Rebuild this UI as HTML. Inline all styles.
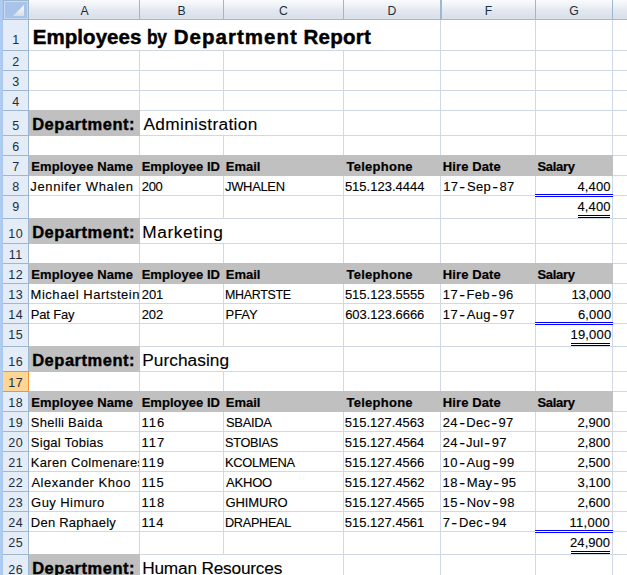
<!DOCTYPE html>
<html><head><meta charset="utf-8"><style>
html,body{margin:0;padding:0;}
body{width:627px;height:575px;position:relative;overflow:hidden;background:#fff;font-family:"Liberation Sans",sans-serif;}
div{position:absolute;}
.t{white-space:nowrap;-webkit-text-stroke:0.2px #000;}
.b{-webkit-text-stroke:0;}
.h{-webkit-text-stroke:0;}
</style></head><body>
<div style="left:29px;top:50px;width:598px;height:1px;background:#d0d7e5"></div><div style="left:29px;top:70px;width:598px;height:1px;background:#d0d7e5"></div><div style="left:29px;top:90px;width:598px;height:1px;background:#d0d7e5"></div><div style="left:29px;top:110px;width:598px;height:1px;background:#d0d7e5"></div><div style="left:29px;top:135px;width:598px;height:1px;background:#d0d7e5"></div><div style="left:29px;top:155px;width:598px;height:1px;background:#d0d7e5"></div><div style="left:29px;top:175px;width:598px;height:1px;background:#d0d7e5"></div><div style="left:29px;top:195px;width:598px;height:1px;background:#d0d7e5"></div><div style="left:29px;top:218px;width:598px;height:1px;background:#d0d7e5"></div><div style="left:29px;top:243px;width:598px;height:1px;background:#d0d7e5"></div><div style="left:29px;top:263px;width:598px;height:1px;background:#d0d7e5"></div><div style="left:29px;top:283px;width:598px;height:1px;background:#d0d7e5"></div><div style="left:29px;top:303px;width:598px;height:1px;background:#d0d7e5"></div><div style="left:29px;top:323px;width:598px;height:1px;background:#d0d7e5"></div><div style="left:29px;top:346px;width:598px;height:1px;background:#d0d7e5"></div><div style="left:29px;top:371px;width:598px;height:1px;background:#d0d7e5"></div><div style="left:29px;top:391px;width:598px;height:1px;background:#d0d7e5"></div><div style="left:29px;top:411px;width:598px;height:1px;background:#d0d7e5"></div><div style="left:29px;top:431px;width:598px;height:1px;background:#d0d7e5"></div><div style="left:29px;top:451px;width:598px;height:1px;background:#d0d7e5"></div><div style="left:29px;top:471px;width:598px;height:1px;background:#d0d7e5"></div><div style="left:29px;top:491px;width:598px;height:1px;background:#d0d7e5"></div><div style="left:29px;top:511px;width:598px;height:1px;background:#d0d7e5"></div><div style="left:29px;top:531px;width:598px;height:1px;background:#d0d7e5"></div><div style="left:29px;top:554px;width:598px;height:1px;background:#d0d7e5"></div><div style="left:139px;top:50px;width:1px;height:525px;background:#d0d7e5"></div><div style="left:223px;top:50px;width:1px;height:61px;background:#d0d7e5"></div><div style="left:223px;top:135px;width:1px;height:84px;background:#d0d7e5"></div><div style="left:223px;top:243px;width:1px;height:104px;background:#d0d7e5"></div><div style="left:223px;top:371px;width:1px;height:184px;background:#d0d7e5"></div><div style="left:343px;top:50px;width:1px;height:525px;background:#d0d7e5"></div><div style="left:440px;top:20px;width:1px;height:555px;background:#d0d7e5"></div><div style="left:535px;top:20px;width:1px;height:555px;background:#d0d7e5"></div><div style="left:612px;top:20px;width:1px;height:555px;background:#d0d7e5"></div><div style="left:29px;top:110px;width:111px;height:26px;background:#c0c0c0"></div><div style="left:29px;top:218px;width:111px;height:26px;background:#c0c0c0"></div><div style="left:29px;top:346px;width:111px;height:26px;background:#c0c0c0"></div><div style="left:29px;top:554px;width:111px;height:22px;background:#c0c0c0"></div><div style="left:29px;top:155px;width:584px;height:21px;background:#c0c0c0"></div><div style="left:29px;top:263px;width:584px;height:21px;background:#c0c0c0"></div><div style="left:29px;top:391px;width:584px;height:21px;background:#c0c0c0"></div><div style="left:535px;top:194px;width:78px;height:3px;background:#ffffff"></div><div style="left:535px;top:194px;width:78px;height:1px;background:#0000ff"></div><div style="left:535px;top:196px;width:78px;height:1px;background:#0000ff"></div><div style="left:535px;top:322px;width:78px;height:3px;background:#ffffff"></div><div style="left:535px;top:322px;width:78px;height:1px;background:#0000ff"></div><div style="left:535px;top:324px;width:78px;height:1px;background:#0000ff"></div><div style="left:535px;top:530px;width:78px;height:3px;background:#ffffff"></div><div style="left:535px;top:530px;width:78px;height:1px;background:#0000ff"></div><div style="left:535px;top:532px;width:78px;height:1px;background:#0000ff"></div><div style="left:578px;top:215px;width:32px;height:1px;background:#000"></div><div style="left:578px;top:217px;width:32px;height:1px;background:#000"></div><div style="left:571px;top:343px;width:39px;height:1px;background:#000"></div><div style="left:571px;top:345px;width:39px;height:1px;background:#000"></div><div style="left:571px;top:551px;width:39px;height:1px;background:#000"></div><div style="left:571px;top:553px;width:39px;height:1px;background:#000"></div><div style="left:0px;top:0px;width:3px;height:575px;background:#b0cbf0"></div><div style="left:2px;top:0px;width:1px;height:575px;background:#aac7ee"></div><div style="left:3px;top:20px;width:25px;height:555px;background:#e4ecf7"></div><div style="left:28px;top:0px;width:1px;height:575px;background:#9eb6ce"></div><div style="left:29px;top:0px;width:598px;height:19px;background:linear-gradient(#f9fbfd 0%,#eef2f6 30%,#e3e8f0 55%,#d9e0ea 94%,#e2e7ee 100%)"></div><div style="left:29px;top:19px;width:598px;height:1px;background:#9eb6ce"></div><div style="left:139px;top:0px;width:1px;height:19px;background:#9eb6ce"></div><div style="left:223px;top:0px;width:1px;height:19px;background:#9eb6ce"></div><div style="left:343px;top:0px;width:1px;height:19px;background:#9eb6ce"></div><div style="left:440px;top:0px;width:1px;height:19px;background:#9eb6ce"></div><div style="left:535px;top:0px;width:1px;height:19px;background:#9eb6ce"></div><div style="left:612px;top:0px;width:1px;height:19px;background:#9eb6ce"></div><div style="left:441px;top:0px;width:1px;height:19px;background:#9eb6ce"></div><div style="left:3px;top:19px;width:25px;height:1px;background:#9eb6ce"></div><div style="left:3px;top:50px;width:25px;height:1px;background:#9eb6ce"></div><div style="left:3px;top:70px;width:25px;height:1px;background:#9eb6ce"></div><div style="left:3px;top:90px;width:25px;height:1px;background:#9eb6ce"></div><div style="left:3px;top:110px;width:25px;height:1px;background:#9eb6ce"></div><div style="left:3px;top:135px;width:25px;height:1px;background:#9eb6ce"></div><div style="left:3px;top:155px;width:25px;height:1px;background:#9eb6ce"></div><div style="left:3px;top:175px;width:25px;height:1px;background:#9eb6ce"></div><div style="left:3px;top:195px;width:25px;height:1px;background:#9eb6ce"></div><div style="left:3px;top:218px;width:25px;height:1px;background:#9eb6ce"></div><div style="left:3px;top:243px;width:25px;height:1px;background:#9eb6ce"></div><div style="left:3px;top:263px;width:25px;height:1px;background:#9eb6ce"></div><div style="left:3px;top:283px;width:25px;height:1px;background:#9eb6ce"></div><div style="left:3px;top:303px;width:25px;height:1px;background:#9eb6ce"></div><div style="left:3px;top:323px;width:25px;height:1px;background:#9eb6ce"></div><div style="left:3px;top:346px;width:25px;height:1px;background:#9eb6ce"></div><div style="left:3px;top:371px;width:25px;height:1px;background:#9eb6ce"></div><div style="left:3px;top:391px;width:25px;height:1px;background:#9eb6ce"></div><div style="left:3px;top:411px;width:25px;height:1px;background:#9eb6ce"></div><div style="left:3px;top:431px;width:25px;height:1px;background:#9eb6ce"></div><div style="left:3px;top:451px;width:25px;height:1px;background:#9eb6ce"></div><div style="left:3px;top:471px;width:25px;height:1px;background:#9eb6ce"></div><div style="left:3px;top:491px;width:25px;height:1px;background:#9eb6ce"></div><div style="left:3px;top:511px;width:25px;height:1px;background:#9eb6ce"></div><div style="left:3px;top:531px;width:25px;height:1px;background:#9eb6ce"></div><div style="left:3px;top:554px;width:25px;height:1px;background:#9eb6ce"></div><div style="left:3px;top:0px;width:25px;height:19px;background:#a9c4e9"></div><div style="left:3px;top:0px;width:25px;height:1px;background:#9eb6ce"></div><div style="left:3px;top:0px;width:1px;height:19px;background:#9eb6ce"></div><div style="left:4px;top:1px;width:23px;height:1px;background:#c9dcf3"></div><div style="left:4px;top:1px;width:1px;height:17px;background:#c9dcf3"></div><div style="left:4px;top:18px;width:24px;height:1px;background:#c4d7ef"></div><div style="left:27px;top:1px;width:1px;height:18px;background:#c4d7ef"></div><svg style="position:absolute;left:0;top:0" width="30" height="20"><defs><linearGradient id="tg" x1="0" y1="0" x2="0" y2="1"><stop offset="0" stop-color="#fbfcfd"/><stop offset="1" stop-color="#d9dde4"/></linearGradient></defs><polygon points="24,5 13,16 24,16" fill="url(#tg)"/></svg><div style="left:3px;top:371px;width:26px;height:21px;background:#f29436"></div><div style="left:3px;top:372px;width:25px;height:19px;background:#fdd595"></div>
<div class="t h" style="top:4.97px;font-size:12.2px;line-height:12.2px;color:#1b2e40;left:84.50px;transform:translateX(-50%);">A</div><div class="t h" style="top:4.97px;font-size:12.2px;line-height:12.2px;color:#1b2e40;left:181.50px;transform:translateX(-50%);">B</div><div class="t h" style="top:4.97px;font-size:12.2px;line-height:12.2px;color:#1b2e40;left:283.50px;transform:translateX(-50%);">C</div><div class="t h" style="top:4.97px;font-size:12.2px;line-height:12.2px;color:#1b2e40;left:392.00px;transform:translateX(-50%);">D</div><div class="t h" style="top:4.97px;font-size:12.2px;line-height:12.2px;color:#1b2e40;left:488.50px;transform:translateX(-50%);">F</div><div class="t h" style="top:4.97px;font-size:12.2px;line-height:12.2px;color:#1b2e40;left:574.00px;transform:translateX(-50%);">G</div><div class="t h" style="top:34.32px;font-size:12.5px;line-height:12.5px;color:#1b2e40;left:15.70px;transform:translateX(-50%);">1</div><div class="t h" style="top:56.32px;font-size:12.5px;line-height:12.5px;color:#1b2e40;left:15.70px;transform:translateX(-50%);">2</div><div class="t h" style="top:76.32px;font-size:12.5px;line-height:12.5px;color:#1b2e40;left:15.70px;transform:translateX(-50%);">3</div><div class="t h" style="top:96.32px;font-size:12.5px;line-height:12.5px;color:#1b2e40;left:15.70px;transform:translateX(-50%);">4</div><div class="t h" style="top:120.32px;font-size:12.5px;line-height:12.5px;color:#1b2e40;left:15.70px;transform:translateX(-50%);">5</div><div class="t h" style="top:141.32px;font-size:12.5px;line-height:12.5px;color:#1b2e40;left:15.70px;transform:translateX(-50%);">6</div><div class="t h" style="top:161.32px;font-size:12.5px;line-height:12.5px;color:#1b2e40;left:15.70px;transform:translateX(-50%);">7</div><div class="t h" style="top:181.32px;font-size:12.5px;line-height:12.5px;color:#1b2e40;left:15.70px;transform:translateX(-50%);">8</div><div class="t h" style="top:201.32px;font-size:12.5px;line-height:12.5px;color:#1b2e40;left:15.70px;transform:translateX(-50%);">9</div><div class="t h" style="top:228.32px;font-size:12.5px;line-height:12.5px;color:#1b2e40;letter-spacing:0.400px;left:15.70px;transform:translateX(-50%);">10</div><div class="t h" style="top:249.32px;font-size:12.5px;line-height:12.5px;color:#1b2e40;letter-spacing:0.400px;left:15.70px;transform:translateX(-50%);">11</div><div class="t h" style="top:269.32px;font-size:12.5px;line-height:12.5px;color:#1b2e40;letter-spacing:0.400px;left:15.70px;transform:translateX(-50%);">12</div><div class="t h" style="top:289.32px;font-size:12.5px;line-height:12.5px;color:#1b2e40;letter-spacing:0.400px;left:15.70px;transform:translateX(-50%);">13</div><div class="t h" style="top:309.32px;font-size:12.5px;line-height:12.5px;color:#1b2e40;letter-spacing:0.400px;left:15.70px;transform:translateX(-50%);">14</div><div class="t h" style="top:329.32px;font-size:12.5px;line-height:12.5px;color:#1b2e40;letter-spacing:0.400px;left:15.70px;transform:translateX(-50%);">15</div><div class="t h" style="top:356.32px;font-size:12.5px;line-height:12.5px;color:#1b2e40;letter-spacing:0.400px;left:15.70px;transform:translateX(-50%);">16</div><div class="t h" style="top:377.32px;font-size:12.5px;line-height:12.5px;color:#1b2e40;letter-spacing:0.400px;left:15.70px;transform:translateX(-50%);">17</div><div class="t h" style="top:397.32px;font-size:12.5px;line-height:12.5px;color:#1b2e40;letter-spacing:0.400px;left:15.70px;transform:translateX(-50%);">18</div><div class="t h" style="top:417.32px;font-size:12.5px;line-height:12.5px;color:#1b2e40;letter-spacing:0.400px;left:15.70px;transform:translateX(-50%);">19</div><div class="t h" style="top:437.32px;font-size:12.5px;line-height:12.5px;color:#1b2e40;letter-spacing:0.400px;left:15.70px;transform:translateX(-50%);">20</div><div class="t h" style="top:457.32px;font-size:12.5px;line-height:12.5px;color:#1b2e40;letter-spacing:0.400px;left:15.70px;transform:translateX(-50%);">21</div><div class="t h" style="top:477.32px;font-size:12.5px;line-height:12.5px;color:#1b2e40;letter-spacing:0.400px;left:15.70px;transform:translateX(-50%);">22</div><div class="t h" style="top:497.32px;font-size:12.5px;line-height:12.5px;color:#1b2e40;letter-spacing:0.400px;left:15.70px;transform:translateX(-50%);">23</div><div class="t h" style="top:517.32px;font-size:12.5px;line-height:12.5px;color:#1b2e40;letter-spacing:0.400px;left:15.70px;transform:translateX(-50%);">24</div><div class="t h" style="top:537.32px;font-size:12.5px;line-height:12.5px;color:#1b2e40;letter-spacing:0.400px;left:15.70px;transform:translateX(-50%);">25</div><div class="t h" style="top:564.32px;font-size:12.5px;line-height:12.5px;color:#1b2e40;letter-spacing:0.400px;left:15.70px;transform:translateX(-50%);">26</div><div class="t b" style="top:27.15px;font-size:20.5px;line-height:20.5px;color:#000;font-weight:bold;-webkit-text-stroke:0.45px #000;letter-spacing:0.070px;left:32.67px;">Employees</div><div class="t b" style="top:27.15px;font-size:20.5px;line-height:20.5px;color:#000;font-weight:bold;-webkit-text-stroke:0.45px #000;letter-spacing:-0.300px;transform:scaleX(0.8481);transform-origin:left center;left:146.74px;">by</div><div class="t b" style="top:27.15px;font-size:20.5px;line-height:20.5px;color:#000;font-weight:bold;-webkit-text-stroke:0.45px #000;letter-spacing:1.038px;left:173.67px;">Department</div><div class="t b" style="top:27.15px;font-size:20.5px;line-height:20.5px;color:#000;font-weight:bold;-webkit-text-stroke:0.45px #000;letter-spacing:0.290px;left:303.44px;">Report</div><div class="t b" style="top:116.03px;font-size:16.5px;line-height:16.5px;color:#000;font-weight:bold;-webkit-text-stroke:0.4px #000;letter-spacing:0.528px;left:32.14px;">Department:</div><div class="t" style="top:116.06px;font-size:17.3px;line-height:17.3px;color:#000;-webkit-text-stroke:0.12px #000;letter-spacing:0.339px;left:143.45px;">Administration</div><div class="t b" style="top:160.00px;font-size:13px;line-height:13px;color:#000;font-weight:bold;-webkit-text-stroke:0.2px #000;letter-spacing:0.103px;left:31.24px;">Employee Name</div><div class="t b" style="top:160.00px;font-size:13px;line-height:13px;color:#000;font-weight:bold;-webkit-text-stroke:0.2px #000;letter-spacing:0.031px;left:141.64px;">Employee ID</div><div class="t b" style="top:160.00px;font-size:13px;line-height:13px;color:#000;font-weight:bold;-webkit-text-stroke:0.2px #000;letter-spacing:-0.001px;left:225.77px;">Email</div><div class="t b" style="top:160.00px;font-size:13px;line-height:13px;color:#000;font-weight:bold;-webkit-text-stroke:0.2px #000;letter-spacing:0.258px;left:346.48px;">Telephone</div><div class="t b" style="top:160.00px;font-size:13px;line-height:13px;color:#000;font-weight:bold;-webkit-text-stroke:0.2px #000;letter-spacing:0.091px;left:442.82px;">Hire Date</div><div class="t b" style="top:160.00px;font-size:13px;line-height:13px;color:#000;font-weight:bold;-webkit-text-stroke:0.2px #000;letter-spacing:-0.293px;left:537.38px;">Salary</div><div class="t" style="top:180.00px;font-size:13px;line-height:13px;color:#000;-webkit-text-stroke:0.12px #000;letter-spacing:0.626px;left:30.32px;">Jennifer Whalen</div><div class="t" style="top:180.00px;font-size:13px;line-height:13px;color:#000;-webkit-text-stroke:0.12px #000;letter-spacing:-0.300px;left:141.75px;">200</div><div class="t" style="top:180.00px;font-size:13px;line-height:13px;color:#000;-webkit-text-stroke:0.12px #000;letter-spacing:-0.300px;transform:scaleX(0.9956);transform-origin:left center;left:225.40px;">JWHALEN</div><div class="t" style="top:180.00px;font-size:13px;line-height:13px;color:#000;-webkit-text-stroke:0.12px #000;letter-spacing:-0.001px;left:344.90px;">515.123.4444</div><div class="t" style="top:180.00px;font-size:13px;line-height:13px;color:#000;-webkit-text-stroke:0.12px #000;letter-spacing:0.300px;left:443.33px;">17<span style="display:inline-block;transform:scaleX(1.35);margin:0 1.960px">-</span>Sep<span style="display:inline-block;transform:scaleX(1.35);margin:0 1.960px">-</span>87</div><div class="t" style="top:180.00px;font-size:13px;line-height:13px;color:#000;-webkit-text-stroke:0.12px #000;letter-spacing:0.096px;right:16.45px;">4,400</div><div class="t" style="top:200.00px;font-size:13px;line-height:13px;color:#000;-webkit-text-stroke:0.12px #000;letter-spacing:0.096px;right:16.45px;">4,400</div><div class="t b" style="top:224.03px;font-size:16.5px;line-height:16.5px;color:#000;font-weight:bold;-webkit-text-stroke:0.4px #000;letter-spacing:0.528px;left:32.14px;">Department:</div><div class="t" style="top:224.06px;font-size:17.3px;line-height:17.3px;color:#000;-webkit-text-stroke:0.12px #000;letter-spacing:0.607px;left:142.20px;">Marketing</div><div class="t b" style="top:268.00px;font-size:13px;line-height:13px;color:#000;font-weight:bold;-webkit-text-stroke:0.2px #000;letter-spacing:0.103px;left:31.24px;">Employee Name</div><div class="t b" style="top:268.00px;font-size:13px;line-height:13px;color:#000;font-weight:bold;-webkit-text-stroke:0.2px #000;letter-spacing:0.031px;left:141.64px;">Employee ID</div><div class="t b" style="top:268.00px;font-size:13px;line-height:13px;color:#000;font-weight:bold;-webkit-text-stroke:0.2px #000;letter-spacing:-0.001px;left:225.77px;">Email</div><div class="t b" style="top:268.00px;font-size:13px;line-height:13px;color:#000;font-weight:bold;-webkit-text-stroke:0.2px #000;letter-spacing:0.258px;left:346.48px;">Telephone</div><div class="t b" style="top:268.00px;font-size:13px;line-height:13px;color:#000;font-weight:bold;-webkit-text-stroke:0.2px #000;letter-spacing:0.091px;left:442.82px;">Hire Date</div><div class="t b" style="top:268.00px;font-size:13px;line-height:13px;color:#000;font-weight:bold;-webkit-text-stroke:0.2px #000;letter-spacing:-0.293px;left:537.38px;">Salary</div><div class="t" style="top:288.00px;font-size:13px;line-height:13px;color:#000;-webkit-text-stroke:0.12px #000;letter-spacing:0.531px;left:30.57px;">Michael Hartstein</div><div class="t" style="top:288.00px;font-size:13px;line-height:13px;color:#000;-webkit-text-stroke:0.12px #000;letter-spacing:-0.059px;left:141.72px;">201</div><div class="t" style="top:288.00px;font-size:13px;line-height:13px;color:#000;-webkit-text-stroke:0.12px #000;letter-spacing:-0.300px;transform:scaleX(0.9565);transform-origin:left center;left:225.44px;">MHARTSTE</div><div class="t" style="top:288.00px;font-size:13px;line-height:13px;color:#000;-webkit-text-stroke:0.12px #000;left:344.90px;">515.123.5555</div><div class="t" style="top:288.00px;font-size:13px;line-height:13px;color:#000;-webkit-text-stroke:0.12px #000;letter-spacing:0.300px;left:442.87px;">17<span style="display:inline-block;transform:scaleX(1.35);margin:0 1.997px">-</span>Feb<span style="display:inline-block;transform:scaleX(1.35);margin:0 1.997px">-</span>96</div><div class="t" style="top:288.00px;font-size:13px;line-height:13px;color:#000;-webkit-text-stroke:0.12px #000;letter-spacing:-0.030px;right:16.03px;">13,000</div><div class="t" style="top:308.00px;font-size:13px;line-height:13px;color:#000;-webkit-text-stroke:0.12px #000;letter-spacing:-0.190px;left:30.82px;">Pat Fay</div><div class="t" style="top:308.00px;font-size:13px;line-height:13px;color:#000;-webkit-text-stroke:0.12px #000;letter-spacing:-0.148px;left:141.72px;">202</div><div class="t" style="top:308.00px;font-size:13px;line-height:13px;color:#000;-webkit-text-stroke:0.12px #000;letter-spacing:-0.077px;left:225.59px;">PFAY</div><div class="t" style="top:308.00px;font-size:13px;line-height:13px;color:#000;-webkit-text-stroke:0.12px #000;letter-spacing:-0.029px;left:345.13px;">603.123.6666</div><div class="t" style="top:308.00px;font-size:13px;line-height:13px;color:#000;-webkit-text-stroke:0.12px #000;letter-spacing:0.300px;left:442.87px;">17<span style="display:inline-block;transform:scaleX(1.35);margin:0 2.127px">-</span>Aug<span style="display:inline-block;transform:scaleX(1.35);margin:0 2.127px">-</span>97</div><div class="t" style="top:308.00px;font-size:13px;line-height:13px;color:#000;-webkit-text-stroke:0.12px #000;letter-spacing:0.169px;right:15.70px;">6,000</div><div class="t" style="top:328.00px;font-size:13px;line-height:13px;color:#000;-webkit-text-stroke:0.12px #000;letter-spacing:0.160px;right:15.71px;">19,000</div><div class="t b" style="top:352.03px;font-size:16.5px;line-height:16.5px;color:#000;font-weight:bold;-webkit-text-stroke:0.4px #000;letter-spacing:0.528px;left:32.14px;">Department:</div><div class="t" style="top:352.06px;font-size:17.3px;line-height:17.3px;color:#000;-webkit-text-stroke:0.12px #000;letter-spacing:0.042px;left:142.20px;">Purchasing</div><div class="t b" style="top:396.00px;font-size:13px;line-height:13px;color:#000;font-weight:bold;-webkit-text-stroke:0.2px #000;letter-spacing:0.103px;left:31.24px;">Employee Name</div><div class="t b" style="top:396.00px;font-size:13px;line-height:13px;color:#000;font-weight:bold;-webkit-text-stroke:0.2px #000;letter-spacing:0.031px;left:141.64px;">Employee ID</div><div class="t b" style="top:396.00px;font-size:13px;line-height:13px;color:#000;font-weight:bold;-webkit-text-stroke:0.2px #000;letter-spacing:-0.001px;left:225.77px;">Email</div><div class="t b" style="top:396.00px;font-size:13px;line-height:13px;color:#000;font-weight:bold;-webkit-text-stroke:0.2px #000;letter-spacing:0.258px;left:346.48px;">Telephone</div><div class="t b" style="top:396.00px;font-size:13px;line-height:13px;color:#000;font-weight:bold;-webkit-text-stroke:0.2px #000;letter-spacing:0.091px;left:442.82px;">Hire Date</div><div class="t b" style="top:396.00px;font-size:13px;line-height:13px;color:#000;font-weight:bold;-webkit-text-stroke:0.2px #000;letter-spacing:-0.293px;left:537.38px;">Salary</div><div class="t" style="top:416.00px;font-size:13px;line-height:13px;color:#000;-webkit-text-stroke:0.12px #000;letter-spacing:0.260px;left:30.87px;">Shelli Baida</div><div class="t" style="top:416.00px;font-size:13px;line-height:13px;color:#000;-webkit-text-stroke:0.12px #000;letter-spacing:1.091px;left:141.40px;">116</div><div class="t" style="top:416.00px;font-size:13px;line-height:13px;color:#000;-webkit-text-stroke:0.12px #000;letter-spacing:-0.300px;transform:scaleX(0.9959);transform-origin:left center;left:225.57px;">SBAIDA</div><div class="t" style="top:416.00px;font-size:13px;line-height:13px;color:#000;-webkit-text-stroke:0.12px #000;letter-spacing:-0.009px;left:344.80px;">515.127.4563</div><div class="t" style="top:416.00px;font-size:13px;line-height:13px;color:#000;-webkit-text-stroke:0.12px #000;letter-spacing:0.300px;left:442.84px;">24<span style="display:inline-block;transform:scaleX(1.35);margin:0 1.845px">-</span>Dec<span style="display:inline-block;transform:scaleX(1.35);margin:0 1.845px">-</span>97</div><div class="t" style="top:416.00px;font-size:13px;line-height:13px;color:#000;-webkit-text-stroke:0.12px #000;letter-spacing:-0.003px;right:16.88px;">2,900</div><div class="t" style="top:436.00px;font-size:13px;line-height:13px;color:#000;-webkit-text-stroke:0.12px #000;letter-spacing:0.229px;left:30.87px;">Sigal Tobias</div><div class="t" style="top:436.00px;font-size:13px;line-height:13px;color:#000;-webkit-text-stroke:0.12px #000;letter-spacing:1.102px;left:141.40px;">117</div><div class="t" style="top:436.00px;font-size:13px;line-height:13px;color:#000;-webkit-text-stroke:0.12px #000;letter-spacing:-0.300px;transform:scaleX(0.9795);transform-origin:left center;left:225.34px;">STOBIAS</div><div class="t" style="top:436.00px;font-size:13px;line-height:13px;color:#000;-webkit-text-stroke:0.12px #000;left:344.80px;">515.127.4564</div><div class="t" style="top:436.00px;font-size:13px;line-height:13px;color:#000;-webkit-text-stroke:0.12px #000;letter-spacing:0.300px;left:442.84px;">24<span style="display:inline-block;transform:scaleX(1.35);margin:0 1.737px">-</span>Jul<span style="display:inline-block;transform:scaleX(1.35);margin:0 1.737px">-</span>97</div><div class="t" style="top:436.00px;font-size:13px;line-height:13px;color:#000;-webkit-text-stroke:0.12px #000;letter-spacing:-0.003px;right:16.88px;">2,800</div><div style="left:30.78px;top:452.00px;width:108.22px;height:21px;overflow:hidden"><div class="t" style="top:4px;font-size:13px;line-height:13px;color:#000;-webkit-text-stroke:0.12px #000;letter-spacing:0.327px;left:0;">Karen Colmenares</div></div><div class="t" style="top:456.00px;font-size:13px;line-height:13px;color:#000;-webkit-text-stroke:0.12px #000;letter-spacing:0.903px;left:141.40px;">119</div><div class="t" style="top:456.00px;font-size:13px;line-height:13px;color:#000;-webkit-text-stroke:0.12px #000;letter-spacing:-0.300px;transform:scaleX(0.9903);transform-origin:left center;left:225.28px;">KCOLMENA</div><div class="t" style="top:456.00px;font-size:13px;line-height:13px;color:#000;-webkit-text-stroke:0.12px #000;letter-spacing:-0.005px;left:344.80px;">515.127.4566</div><div class="t" style="top:456.00px;font-size:13px;line-height:13px;color:#000;-webkit-text-stroke:0.12px #000;letter-spacing:0.300px;left:442.62px;">10<span style="display:inline-block;transform:scaleX(1.35);margin:0 2.102px">-</span>Aug<span style="display:inline-block;transform:scaleX(1.35);margin:0 2.102px">-</span>99</div><div class="t" style="top:456.00px;font-size:13px;line-height:13px;color:#000;-webkit-text-stroke:0.12px #000;letter-spacing:-0.003px;right:16.88px;">2,500</div><div class="t" style="top:476.00px;font-size:13px;line-height:13px;color:#000;-webkit-text-stroke:0.12px #000;letter-spacing:0.498px;left:31.43px;">Alexander Khoo</div><div class="t" style="top:476.00px;font-size:13px;line-height:13px;color:#000;-webkit-text-stroke:0.12px #000;letter-spacing:0.831px;left:141.40px;">115</div><div class="t" style="top:476.00px;font-size:13px;line-height:13px;color:#000;-webkit-text-stroke:0.12px #000;letter-spacing:-0.209px;left:226.12px;">AKHOO</div><div class="t" style="top:476.00px;font-size:13px;line-height:13px;color:#000;-webkit-text-stroke:0.12px #000;letter-spacing:0.015px;left:344.80px;">515.127.4562</div><div class="t" style="top:476.00px;font-size:13px;line-height:13px;color:#000;-webkit-text-stroke:0.12px #000;letter-spacing:0.300px;left:442.62px;">18<span style="display:inline-block;transform:scaleX(1.35);margin:0 2.233px">-</span>May<span style="display:inline-block;transform:scaleX(1.35);margin:0 2.233px">-</span>95</div><div class="t" style="top:476.00px;font-size:13px;line-height:13px;color:#000;-webkit-text-stroke:0.12px #000;letter-spacing:0.081px;right:16.47px;">3,100</div><div class="t" style="top:496.00px;font-size:13px;line-height:13px;color:#000;-webkit-text-stroke:0.12px #000;letter-spacing:0.427px;left:31.11px;">Guy Himuro</div><div class="t" style="top:496.00px;font-size:13px;line-height:13px;color:#000;-webkit-text-stroke:0.12px #000;letter-spacing:1.069px;left:141.40px;">118</div><div class="t" style="top:496.00px;font-size:13px;line-height:13px;color:#000;-webkit-text-stroke:0.12px #000;letter-spacing:-0.127px;left:225.60px;">GHIMURO</div><div class="t" style="top:496.00px;font-size:13px;line-height:13px;color:#000;-webkit-text-stroke:0.12px #000;letter-spacing:-0.012px;left:344.80px;">515.127.4565</div><div class="t" style="top:496.00px;font-size:13px;line-height:13px;color:#000;-webkit-text-stroke:0.12px #000;letter-spacing:0.300px;left:442.62px;">15<span style="display:inline-block;transform:scaleX(1.35);margin:0 2.167px">-</span>Nov<span style="display:inline-block;transform:scaleX(1.35);margin:0 2.167px">-</span>98</div><div class="t" style="top:496.00px;font-size:13px;line-height:13px;color:#000;-webkit-text-stroke:0.12px #000;letter-spacing:-0.003px;right:16.88px;">2,600</div><div class="t" style="top:516.00px;font-size:13px;line-height:13px;color:#000;-webkit-text-stroke:0.12px #000;letter-spacing:0.234px;left:30.82px;">Den Raphaely</div><div class="t" style="top:516.00px;font-size:13px;line-height:13px;color:#000;-webkit-text-stroke:0.12px #000;letter-spacing:0.649px;left:141.40px;">114</div><div class="t" style="top:516.00px;font-size:13px;line-height:13px;color:#000;-webkit-text-stroke:0.12px #000;letter-spacing:-0.300px;transform:scaleX(0.9757);transform-origin:left center;left:225.46px;">DRAPHEAL</div><div class="t" style="top:516.00px;font-size:13px;line-height:13px;color:#000;-webkit-text-stroke:0.12px #000;left:344.80px;">515.127.4561</div><div class="t" style="top:516.00px;font-size:13px;line-height:13px;color:#000;-webkit-text-stroke:0.12px #000;letter-spacing:0.300px;left:442.84px;">7<span style="display:inline-block;transform:scaleX(1.35);margin:0 2.020px">-</span>Dec<span style="display:inline-block;transform:scaleX(1.35);margin:0 2.020px">-</span>94</div><div class="t" style="top:516.00px;font-size:13px;line-height:13px;color:#000;-webkit-text-stroke:0.12px #000;letter-spacing:0.257px;right:17.11px;">11,000</div><div class="t" style="top:536.00px;font-size:13px;line-height:13px;color:#000;-webkit-text-stroke:0.12px #000;letter-spacing:0.043px;right:16.88px;">24,900</div><div class="t b" style="top:560.03px;font-size:16.5px;line-height:16.5px;color:#000;font-weight:bold;-webkit-text-stroke:0.4px #000;letter-spacing:0.528px;left:32.14px;">Department:</div><div class="t" style="top:560.06px;font-size:17.3px;line-height:17.3px;color:#000;-webkit-text-stroke:0.12px #000;letter-spacing:-0.212px;left:142.20px;">Human Resources</div>
</body></html>
